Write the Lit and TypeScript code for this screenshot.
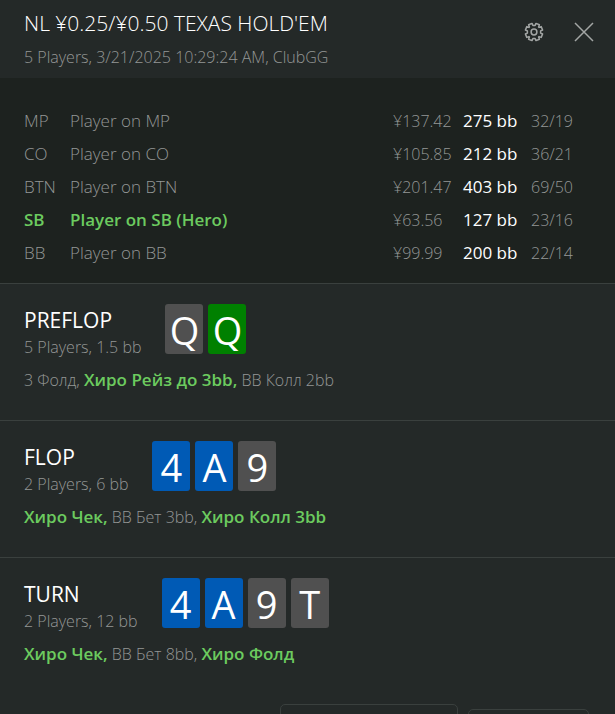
import { LitElement, html, css } from "lit";
import { customElement, property } from "lit/decorators.js";
import { classMap } from "lit/directives/class-map.js";

type Suit = "spade" | "club" | "diamond";

interface Card {
  rank: string;
  suit: Suit;
}

interface Action {
  text: string;
  hero?: boolean;
}

interface Street {
  name: string;
  info: string;
  cards: Card[];
  actions: Action[];
}

interface Player {
  pos: string;
  stack: string;
  bb: string;
  stats: string;
  hero?: boolean;
}

const players: Player[] = [
  { pos: "MP", stack: "¥137.42", bb: "275 bb", stats: "32/19" },
  { pos: "CO", stack: "¥105.85", bb: "212 bb", stats: "36/21" },
  { pos: "BTN", stack: "¥201.47", bb: "403 bb", stats: "69/50" },
  { pos: "SB", stack: "¥63.56", bb: "127 bb", stats: "23/16", hero: true },
  { pos: "BB", stack: "¥99.99", bb: "200 bb", stats: "22/14" },
];

const streets: Street[] = [
  {
    name: "PREFLOP",
    info: "5 Players, 1.5 bb",
    cards: [
      { rank: "Q", suit: "spade" },
      { rank: "Q", suit: "club" },
    ],
    actions: [
      { text: "3 Фолд," },
      { text: "Хиро Рейз до 3bb,", hero: true },
      { text: "BB Колл 2bb" },
    ],
  },
  {
    name: "FLOP",
    info: "2 Players, 6 bb",
    cards: [
      { rank: "4", suit: "diamond" },
      { rank: "A", suit: "diamond" },
      { rank: "9", suit: "spade" },
    ],
    actions: [
      { text: "Хиро Чек,", hero: true },
      { text: "BB Бет 3bb," },
      { text: "Хиро Колл 3bb", hero: true },
    ],
  },
  {
    name: "TURN",
    info: "2 Players, 12 bb",
    cards: [
      { rank: "4", suit: "diamond" },
      { rank: "A", suit: "diamond" },
      { rank: "9", suit: "spade" },
      { rank: "T", suit: "spade" },
    ],
    actions: [
      { text: "Хиро Чек,", hero: true },
      { text: "BB Бет 8bb," },
      { text: "Хиро Фолд", hero: true },
    ],
  },
];

@customElement("street-section")
class StreetSection extends LitElement {
  static styles = css`
    :host {
      display: block;
      padding: 20px 24px 27px;
      border-top: 1px solid #3a403e;
    }
    .head {
      display: flex;
      gap: 24px;
      height: 50px;
    }
    .title {
      margin: 0;
      padding-top: 2px;
      font-size: 21px;
      line-height: 28px;
      font-weight: 400;
      color: #fff;
    }
    .info {
      margin: 0;
      line-height: 26px;
    }
    .cards {
      display: flex;
      gap: 5px;
    }
    .card {
      width: 38px;
      height: 50px;
      border-radius: 3px;
      color: #fff;
      font-size: 38px;
      line-height: 52px;
      font-weight: 400;
      text-align: center;
    }
    .spade {
      background: #505050;
    }
    .club {
      background: #008000;
    }
    .diamond {
      background: #005ab5;
    }
    .actions {
      margin: 13px 0 0;
      line-height: 26px;
    }
    .hero {
      color: #6ccb5f;
      font-size: 17px;
      font-weight: 600;
    }
  `;

  @property({ attribute: false }) street!: Street;

  render() {
    const { name, info, cards, actions } = this.street;
    return html`
      <div class="head">
        <div>
          <h2 class="title">${name}</h2>
          <p class="info">${info}</p>
        </div>
        <div class="cards">
          ${cards.map((c) => html`<div class="card ${c.suit}">${c.rank}</div>`)}
        </div>
      </div>
      <p class="actions">
        ${actions.map((a) => html`<span class=${classMap({ hero: !!a.hero })}>${a.text}</span> `)}
      </p>
    `;
  }
}

@customElement("app-root")
class AppRoot extends LitElement {
  static styles = css`
    :host {
      display: block;
      height: 100vh;
      overflow: hidden;
      background: #242928;
      color: #949796;
      font-family: "Open Sans", "Noto Sans", sans-serif;
      font-size: 16px;
      font-weight: 300;
    }
    .header {
      display: flex;
      justify-content: space-between;
      padding: 7px 20px 6px 24px;
    }
    .title {
      margin: 0;
      font-size: 21px;
      line-height: 32px;
      font-weight: 300;
      color: #fff;
    }
    .sub {
      margin: 0;
      padding-top: 4px;
      line-height: 29px;
    }
    .tools {
      display: flex;
      gap: 28px;
      padding-top: 14px;
    }
    .tool {
      display: block;
      width: 22px;
      height: 22px;
      padding: 0;
      border: 0;
      background: none;
      color: #a3a6a5;
    }
    .tool svg {
      display: block;
    }
    .players {
      padding: 26px 24px 14px;
      background: #1d221f;
    }
    table {
      width: 100%;
      table-layout: fixed;
      border-collapse: collapse;
    }
    td {
      height: 33px;
      padding: 0;
      line-height: 26px;
      text-align: left;
      white-space: nowrap;
    }
    .c-pos {
      width: 46px;
    }
    .c-stack {
      width: 70px;
    }
    .c-bb {
      width: 68px;
    }
    .c-stats {
      width: 60px;
    }
    .who {
      font-size: 17px;
    }
    .bb {
      color: #fff;
      font-size: 17px;
      font-weight: 400;
    }
    .hero .who {
      color: #6ccb5f;
      font-weight: 600;
    }
    .footer {
      display: flex;
      align-items: center;
      justify-content: flex-end;
      gap: 10px;
      padding: 10px 26px 0 24px;
    }
    .field {
      box-sizing: border-box;
      padding: 0;
      border: 1px solid #3a403e;
      border-radius: 5px;
      background: none;
      color: inherit;
    }
    .wide {
      width: 178px;
      height: 42px;
    }
    .narrow {
      width: 121px;
      height: 32px;
    }
  `;

  render() {
    return html`
      <header class="header">
        <div>
          <h1 class="title">NL ¥0.25/¥0.50 TEXAS HOLD'EM</h1>
          <p class="sub">5 Players, 3/21/2025 10:29:24 AM, ClubGG</p>
        </div>
        <div class="tools">
          <button class="tool" aria-label="Settings">
            <svg width="22" height="22" viewBox="0 0 22 22" fill="none" stroke="currentColor" stroke-width="1.5" stroke-linejoin="round">
              <circle cx="11" cy="11" r="2.9" />
              <path d="M9.9 4.4 9 2.4 5.6 3.8 6.4 5.9 5.9 6.4 3.8 5.6 2.4 9 4.4 9.9v2.2L2.4 13l1.4 3.4 2.1-.8.5.5-.8 2.1L9 19.6l.9-2h2.2l.9 2 3.4-1.4-.8-2.1.5-.5 2.1.8 1.4-3.4-2-.9V9.9L19.6 9l-1.4-3.4-2.1.8-.5-.5.8-2.1L13 2.4l-.9 2z" />
            </svg>
          </button>
          <button class="tool" aria-label="Close">
            <svg width="22" height="22" viewBox="0 0 22 22" fill="none" stroke="currentColor" stroke-width="1.5">
              <path d="M2 2 20 20M20 2 2 20" />
            </svg>
          </button>
        </div>
      </header>
      <div class="players">
        <table aria-label="Players">
          <colgroup>
            <col class="c-pos" />
            <col />
            <col class="c-stack" />
            <col class="c-bb" />
            <col class="c-stats" />
          </colgroup>
          <tbody>
            ${players.map(
              (p) => html`
                <tr class=${classMap({ hero: !!p.hero })}>
                  <td class="who">${p.pos}</td>
                  <td class="who">Player on ${p.pos}${p.hero ? " (Hero)" : ""}</td>
                  <td>${p.stack}</td>
                  <td class="bb">${p.bb}</td>
                  <td>${p.stats}</td>
                </tr>
              `
            )}
          </tbody>
        </table>
      </div>
      ${streets.map((s) => html`<street-section .street=${s}></street-section>`)}
      <div class="footer">
        <button class="field wide" aria-label="Copy"></button>
        <button class="field narrow" aria-label="Share"></button>
      </div>
    `;
  }
}
